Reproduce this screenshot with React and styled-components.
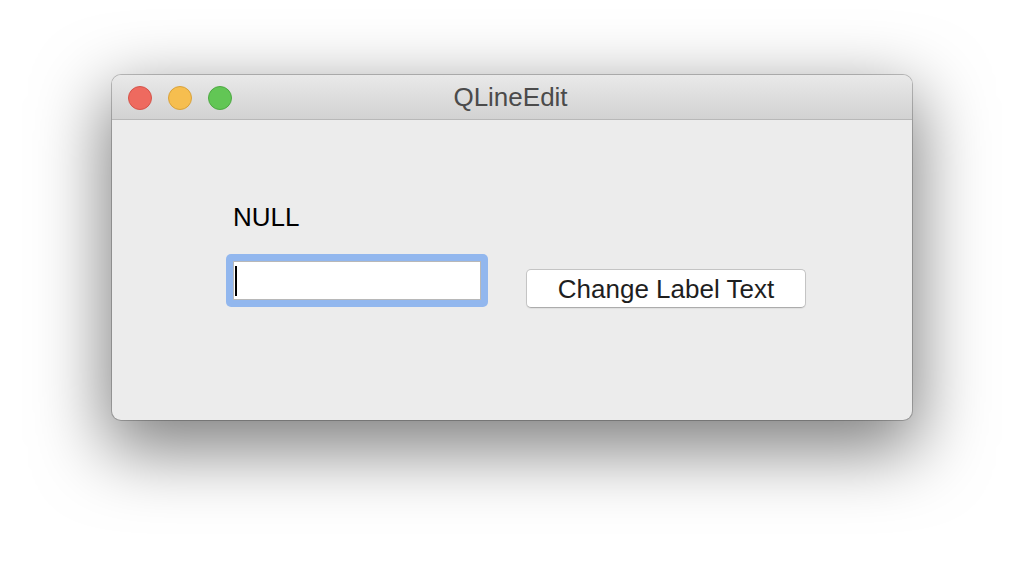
import React from 'react';
import styled, { createGlobalStyle } from 'styled-components';

const GlobalStyle = createGlobalStyle`
  html, body {
    margin: 0;
    padding: 0;
    background: #ffffff;
    font-family: "Liberation Sans", Arial, sans-serif;
  }
`;

const Desktop = styled.div`
  width: 1024px;
  height: 568px;
  padding: 75px 0 0 112px;
  box-sizing: border-box;
  overflow: hidden;
`;

const Window = styled.div`
  width: 800px;
  height: 345px;
  display: flex;
  flex-direction: column;
  background: #ececec;
  border-radius: 9px;
  overflow: hidden;
  box-shadow: 0 0 0 1px rgba(0, 0, 0, 0.22), 0 24px 70px 6px rgba(0, 0, 0, 0.5);
`;

const TitleBar = styled.div`
  position: relative;
  height: 44px;
  flex: none;
  display: flex;
  align-items: center;
  justify-content: center;
  background: linear-gradient(to bottom, #e9e9e9, #d2d2d2);
  border-bottom: 1px solid #b8b8b8;
`;

const Lights = styled.div`
  position: absolute;
  left: 16px;
  top: 11px;
  display: flex;
  gap: 16px;
`;

const Light = styled.span`
  width: 24px;
  height: 24px;
  border-radius: 50%;
  box-sizing: border-box;
  background: ${p => p.fill};
  border: 1px solid ${p => p.edge};
`;

const Title = styled.div`
  font-size: 26px;
  color: #4b4b4b;
  line-height: 30px;
  margin-left: -3px;
`;

const Content = styled.div`
  flex: 1;
  padding: 82px 0 0 114px;
  display: flex;
  flex-direction: column;
`;

const Label = styled.div`
  font-size: 26px;
  line-height: 30px;
  color: #000;
  padding-left: 7px;
`;

const Row = styled.div`
  display: flex;
  align-items: flex-start;
  margin-top: 22px;
  gap: 38px;
`;

const FocusRing = styled.div`
  padding: 7px;
  background: #92b7ee;
  border-radius: 5px;
`;

const Field = styled.div`
  width: 248px;
  height: 39px;
  box-sizing: border-box;
  background: #fff;
  border: 1px solid #b8b8b8;
  padding: 4px 0 0 1px;
`;

const Caret = styled.div`
  width: 2px;
  height: 30px;
  background: #000;
`;

const Button = styled.button`
  margin-top: 15px;
  width: 280px;
  height: 39px;
  box-sizing: border-box;
  background: #fff;
  border: 1px solid #c4c4c4;
  border-bottom-color: #acacac;
  border-radius: 5px;
  font-family: "Liberation Sans", Arial, sans-serif;
  font-size: 26px;
  color: #1e1e1e;
  padding: 0;
  line-height: 36px;
  box-shadow: 0 1px 1px rgba(0, 0, 0, 0.06);
`;

export default function App() {
  return (
    <Desktop>
      <GlobalStyle />
      <Window>
        <TitleBar>
          <Lights>
            <Light fill="#ee6a5f" edge="#d5544a" />
            <Light fill="#f6be4f" edge="#d9a23b" />
            <Light fill="#62c655" edge="#4ea943" />
          </Lights>
          <Title>QLineEdit</Title>
        </TitleBar>
        <Content>
          <Label>NULL</Label>
          <Row>
            <FocusRing>
              <Field>
                <Caret />
              </Field>
            </FocusRing>
            <Button>Change Label Text</Button>
          </Row>
        </Content>
      </Window>
    </Desktop>
  );
}
